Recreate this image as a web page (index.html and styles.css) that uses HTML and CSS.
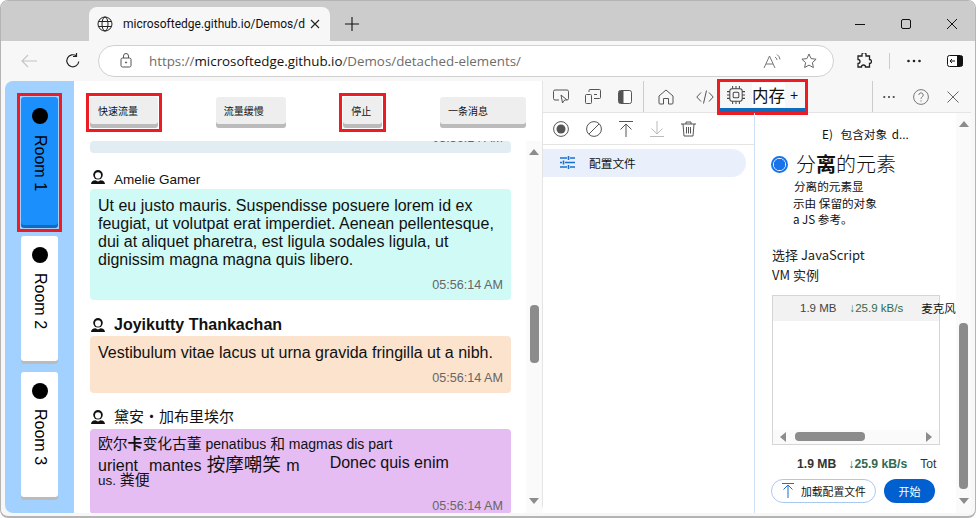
FILE: index.html
```html
<!DOCTYPE html>
<html lang="en">
<head>
    <meta charset="UTF-8">
    <meta name="viewport" content="width=device-width, initial-scale=1.0">
    <title>Detached elements</title>
    <link rel="stylesheet" href="styles.css">
</head>
<body>
<div class="window">
    <div class="tabstrip">
        <div class="tab">
            <svg class="globe" width="16" height="16" viewBox="0 0 16 16" fill="none" stroke="#222" stroke-width="1"><circle cx="8" cy="8" r="7"/><ellipse cx="8" cy="8" rx="3" ry="7"/><path d="M1.500 5.500h13M1.500 10.500h13"/></svg>
            <span class="tab-title">microsoftedge.github.io/Demos/d</span>
            <svg class="tab-close" width="10" height="10" viewBox="0 0 10 10" stroke="#222" stroke-width="1.100"><path d="M1 1l8 8M9 1l-8 8"/></svg>
        </div>
        <svg class="newtab" width="14" height="14" viewBox="0 0 14 14" stroke="#111" stroke-width="1.100"><path d="M7 0v14M0 7h14"/></svg>
        <div class="winctl">
            <svg width="12" height="12" viewBox="0 0 12 12" stroke="#111" stroke-width="1"><path d="M1 6.500h10"/></svg>
            <svg width="12" height="12" viewBox="0 0 12 12" fill="none" stroke="#111" stroke-width="1"><rect x="1.500" y="1.500" width="9" height="9" rx="1.500"/></svg>
            <svg width="12" height="12" viewBox="0 0 12 12" stroke="#111" stroke-width="1"><path d="M1 1l10 10M11 1L1 11"/></svg>
        </div>
    </div>

    <div class="toolbar">
        <svg class="nav-back" width="16" height="14" viewBox="0 0 16 14" fill="none" stroke="#c4c4c4" stroke-width="1.100"><path d="M16 7H1M7 1L1 7l6 6"/></svg>
        <svg class="nav-reload" width="16" height="16" viewBox="0 0 16 16" fill="none" stroke="#222" stroke-width="1.200"><path d="M13.800 8.500A6 6 0 1 1 11.500 3M11.500 0v3.500H8"/></svg>
        <div class="address">
            <svg width="12" height="15" viewBox="0 0 12 15" fill="none" stroke="#555" stroke-width="1"><rect x="1" y="5" width="10" height="9" rx="1.500"/><path d="M3.500 5V3a2.500 2.500 0 0 1 5 0v2"/><circle cx="6" cy="9.500" r=".6" fill="#555"/></svg>
            <span class="url"><span class="url-dim">https://</span>microsoftedge.github.io<span class="url-dim">/Demos/detached-elements/</span></span>
            <svg class="read" width="20" height="16" viewBox="0 0 20 16" fill="none" stroke="#777" stroke-width="1"><path d="M1 15L6.500 3 12 15M3 11h7M12 4a4 4 0 0 1 2 3M14 1.500a7 7 0 0 1 3 5"/></svg>
            <svg width="16" height="16" viewBox="0 0 16 16" fill="none" stroke="#666" stroke-width="1"><path d="M8 1l2.100 4.600 5 .6-3.700 3.400 1 5L8 12.100 3.600 14.600l1-5L.9 6.200l5-.6z"/></svg>
        </div>
        <svg class="ext" width="16" height="16" viewBox="0 0 16 16" fill="none" stroke="#222" stroke-width="1.300"><path d="M6 1.500a2 2 0 0 1 4 0V3h3.500v3.500a2 2 0 0 1 0 4V14H9.500a2 2 0 0 0-4 0H2v-3.500a2 2 0 0 0 0-4V3h4z"/></svg>
        <span class="tb-sep"></span>
        <svg class="dots" width="14" height="4" viewBox="0 0 14 4" fill="#222"><circle cx="1.500" cy="2" r="1.300"/><circle cx="7" cy="2" r="1.300"/><circle cx="12.500" cy="2" r="1.300"/></svg>
        <svg class="sidebar-ico" width="16" height="12" viewBox="0 0 16 12"><rect x=".5" y=".5" width="15" height="11" rx="2" fill="#fff" stroke="#111"/><rect x="10" y="1" width="5.500" height="10" fill="#111"/><path d="M8 6H3M5 4L3 6l2 2" fill="none" stroke="#111"/></svg>
    </div>

    <div class="content">
        <aside class="rooms">
            <div class="marked marked-room">
                <div class="room room-active"><span class="dot"></span><span class="room-name">Room 1</span></div>
            </div>
            <div class="room"><span class="dot"></span><span class="room-name">Room 2</span></div>
            <div class="room"><span class="dot"></span><span class="room-name">Room 3</span></div>
        </aside>

        <main class="chat">
            <div class="actions">
                <div class="marked"><button class="btn btn-fast">快速流量</button></div>
                <button class="btn btn-slow">流量缓慢</button>
                <div class="marked"><button class="btn btn-stop">停止</button></div>
                <button class="btn btn-one">一条消息</button>
            </div>
            <div class="chat-body">
                <div class="messages">
                    <div class="bubble bubble-cut"><time>05:56:14 AM</time></div>

                    <div class="author author-first">
                        <svg class="avatar" width="14" height="14" viewBox="0 0 14 14"><circle cx="7" cy="4.800" r="4.800" fill="#111"/><ellipse cx="7" cy="5.400" rx="3" ry="3.100" fill="#fff"/><path d="M0 14c0-2.500 2-3.500 4.500-3.800L7 11.500l2.500-1.300C12 10.500 14 11.500 14 14z" fill="#111"/></svg>
                        <span>Amelie Gamer</span>
                    </div>
                    <div class="bubble bubble-cyan">
                        <p>Ut eu justo mauris. Suspendisse posuere lorem id ex feugiat, ut volutpat erat imperdiet. Aenean pellentesque, dui at aliquet pharetra, est ligula sodales ligula, ut dignissim magna magna quis libero.</p>
                        <time>05:56:14 AM</time>
                    </div>

                    <div class="author author-big">
                        <svg class="avatar" width="14" height="14" viewBox="0 0 14 14"><circle cx="7" cy="4.800" r="4.800" fill="#111"/><ellipse cx="7" cy="5.400" rx="3" ry="3.100" fill="#fff"/><path d="M0 14c0-2.500 2-3.500 4.500-3.800L7 11.500l2.500-1.300C12 10.500 14 11.500 14 14z" fill="#111"/></svg>
                        <span>Joyikutty Thankachan</span>
                    </div>
                    <div class="bubble bubble-peach">
                        <p>Vestibulum vitae lacus ut urna gravida fringilla ut a nibh.</p>
                        <time>05:56:14 AM</time>
                    </div>

                    <div class="author author-third">
                        <svg class="avatar" width="14" height="14" viewBox="0 0 14 14"><circle cx="7" cy="4.800" r="4.800" fill="#111"/><ellipse cx="7" cy="5.400" rx="3" ry="3.100" fill="#fff"/><path d="M0 14c0-2.500 2-3.500 4.500-3.800L7 11.500l2.500-1.300C12 10.500 14 11.500 14 14z" fill="#111"/></svg>
                        <span>黛安·加布里埃尔</span>
                    </div>
                    <div class="bubble bubble-purple">
                        <div class="mixed-1"><span class="cjk">欧尔<b>卡</b>变化古董</span> penatibus <span class="cjk">和</span> magmas dis part</div>
                        <div class="mixed-2"><span>urient&nbsp; mantes <span class="cjk">按摩嘲笑</span> m</span><span class="mixed-gap">Donec quis enim</span></div>
                        <div class="mixed-3">us. <span class="cjk">粪便</span></div>
                        <time>05:56:14 AM</time>
                    </div>
                </div>
                <div class="scrollbar">
                    <span class="arrow-up"></span>
                    <span class="track"><span class="thumb"></span></span>
                    <span class="arrow-down"></span>
                </div>
            </div>
        </main>

        <section class="devtools">
            <div class="dt-tabs">
                <div class="dt-group">
                    <svg width="16" height="15" viewBox="0 0 16 15" fill="none" stroke="#555" stroke-width="1"><path d="M6 11H2a1.500 1.500 0 0 1-1.500-1.500v-7A1.500 1.500 0 0 1 2 1h12a1.500 1.500 0 0 1 1.500 1.500v7A1.500 1.500 0 0 1 14 11h-1"/><path d="M8 6l1.500 8 1.500-2.500 2.500-1z"/></svg>
                    <svg width="16" height="15" viewBox="0 0 16 15" fill="none" stroke="#555" stroke-width="1"><rect x=".5" y="5.500" width="6" height="9" rx="1"/><path d="M4 3V1.500A1 1 0 0 1 5 .5h9.500a1 1 0 0 1 1 1v7a1 1 0 0 1-1 1H9M9 5.500h3"/></svg>
                    <svg class="dock-ico" width="14" height="14" viewBox="0 0 14 14"><rect x=".5" y=".5" width="13" height="13" rx="2" fill="#fff" stroke="#555"/><rect x="1" y="1" width="4.500" height="12" fill="#555"/></svg>
                </div>
                <div class="dt-group dt-group-panels">
                    <svg width="16" height="16" viewBox="0 0 16 16" fill="none" stroke="#555" stroke-width="1"><path d="M1 7l7-6 7 6v7a1 1 0 0 1-1 1h-3.500V9.500h-5V15H2a1 1 0 0 1-1-1z"/></svg>
                    <svg width="18" height="14" viewBox="0 0 18 14" fill="none" stroke="#555" stroke-width="1"><path d="M5 2.500L.8 7 5 11.500M13 2.500L17.200 7 13 11.500M10.500.5l-3 13"/></svg>
                </div>
                <div class="dt-tab-active">
                    <svg width="18" height="18" viewBox="0 0 16 16" fill="none" stroke="#444" stroke-width=".9"><rect x="2.500" y="2.500" width="11" height="11" rx="2"/><rect x="5.500" y="5.500" width="5" height="5" rx="1"/><path d="M5 0v2.500M8 0v2.500M11 0v2.500M5 13.500V16M8 13.500V16M11 13.500V16M0 5h2.500M0 8h2.500M0 11h2.500M13.500 5H16M13.500 8H16M13.500 11H16"/></svg>
                    <span class="dt-tab-label">内存</span>
                    <span class="dt-tab-plus">+</span>
                </div>
                <div class="dt-right">
                    <svg width="12" height="4" viewBox="0 0 12 4" fill="#444"><circle cx="1.300" cy="2" r="1.100"/><circle cx="6" cy="2" r="1.100"/><circle cx="10.700" cy="2" r="1.100"/></svg>
                    <svg class="help-ico" width="16" height="16" viewBox="0 0 16 16" fill="none" stroke="#777" stroke-width="1"><circle cx="8" cy="8" r="7.400"/><path d="M5.800 6a2.200 2.200 0 1 1 3.400 1.900C8.400 8.400 8 8.900 8 9.800M8 11.400v1.200"/></svg>
                    <svg class="close-ico" width="12" height="12" viewBox="0 0 12 12" stroke="#666" stroke-width="1"><path d="M.5.500l11 11M11.500.5l-11 11"/></svg>
                </div>
            </div>

            <div class="dt-main">
                <div class="profiles">
                    <div class="profile-tools">
                        <svg width="16" height="16" viewBox="0 0 16 16"><circle cx="8" cy="8" r="7.400" fill="none" stroke="#555"/><circle cx="8" cy="8" r="4.500" fill="#555"/></svg>
                        <svg width="16" height="16" viewBox="0 0 16 16" fill="none" stroke="#555"><circle cx="8" cy="8" r="7.400"/><path d="M3 13L13 3"/></svg>
                        <svg width="14" height="16" viewBox="0 0 14 16" fill="none" stroke="#555"><path d="M0 .5h14M7 16V3M1.500 8.500L7 3l5.500 5.500"/></svg>
                        <svg width="14" height="16" viewBox="0 0 14 16" fill="none" stroke="#bbb"><path d="M0 15.500h14M7 0v13M1.500 7.500L7 13l5.500-5.500"/></svg>
                        <svg width="15" height="16" viewBox="0 0 15 16" fill="none" stroke="#555"><path d="M0 3h15M5 3V1h5v2M2 3l1 12h9l1-12M5.500 6v6.500M7.500 6v6.500M9.500 6v6.500"/></svg>
                    </div>
                    <div class="profile-item">
                        <svg width="15" height="13" viewBox="0 0 15 13" fill="none" stroke="#1a6fd0" stroke-width="1.600"><path d="M0 2h7M10 2h5M0 6.500h2M5 6.500h10M0 11h7M10 11h5M8.500 0v4M3.500 4.500v4M8.500 9v4"/></svg>
                        <span>配置文件</span>
                    </div>
                </div>

                <div class="panel">
                    <div class="panel-body">
                        <div class="opt-prev"><span class="opt-e">E)</span> 包含对象 <span class="opt-d">d...</span></div>
                        <label class="opt-radio"><span class="radio"></span><span>分<b>离</b>的元素</span></label>
                        <div class="opt-desc">
                            <div>分离的元素显</div>
                            <div class="indent-less">示由 保留的对象</div>
                            <div class="indent-less">a JS 参考。</div>
                        </div>
                        <div class="vm-title">选择 JavaScript<br>VM 实例</div>
                        <div class="vm-box">
                            <div class="vm-row">
                                <span class="vm-size">1.9 MB</span>
                                <span class="vm-speed">↓25.9 kB/s</span>
                                <span class="vm-name">麦克风</span>
                            </div>
                            <div class="hbar">
                                <span class="arrow-left"></span>
                                <span class="htrack"><span class="hthumb"></span></span>
                                <span class="arrow-right"></span>
                            </div>
                        </div>
                        <div class="totals">
                            <b class="vm-size">1.9 MB</b>
                            <b class="vm-speed">↓25.9 kB/s</b>
                            <span class="total-label">Tot</span>
                        </div>
                        <div class="panel-actions">
                            <button class="btn-load">
                                <svg width="12" height="15" viewBox="0 0 12 15" fill="none" stroke="#1a6fd0"><path d="M0 .5h12M6 15V2M1.500 6.500L6 2l4.500 4.500"/></svg>
                                <span>加载配置文件</span>
                            </button>
                            <button class="btn-start">开始</button>
                        </div>
                    </div>
                    <div class="scrollbar panel-scroll">
                        <span class="arrow-up"></span>
                        <span class="track"><span class="thumb"></span></span>
                        <span class="arrow-down"></span>
                    </div>
                </div>
            </div>
        </section>
    </div>
</div>
</body>
</html>
```

FILE: styles.css
```css
* {
    box-sizing: border-box;
}

html, body {
    height: 100%;
}

body {
    margin: 0;
    background-color: #fff;
    overflow: hidden;
    font-family: "Liberation Sans", "Noto Sans CJK SC", sans-serif;
    color: #111;
}

svg {
    flex: none;
    display: block;
}

.window {
    width: 976px;
    height: 518px;
    display: flex;
    flex-direction: column;
    border: 1px solid #b4b4b4;
    border-bottom-width: 2px;
    border-radius: 8px;
    background-color: #f7f7f7;
    overflow: hidden;
}

/* Tab strip */
.tabstrip {
    height: 40px;
    flex: none;
    display: flex;
    align-items: flex-end;
    background-color: #cccccc;
}

.tab {
    width: 241px;
    height: 34px;
    margin-left: 88px;
    padding: 0 10px 0 8px;
    display: flex;
    align-items: center;
    background-color: #f7f7f7;
    border-radius: 8px 8px 0 0;
}

.globe {
    margin-right: 10px;
}

.tab-title {
    white-space: nowrap;
    font-family: Roboto, "Liberation Sans", sans-serif;
    font-size: 12px;
}

.tab-close {
    margin-left: auto;
}

.newtab {
    margin: 0 0 10px 15px;
}

.winctl {
    margin: 0 0 11px auto;
    padding-right: 17px;
    display: flex;
    gap: 34px;
}

/* Address bar row */
.toolbar {
    height: 40px;
    flex: none;
    display: flex;
    align-items: center;
    padding-bottom: 1px;
}

.nav-back {
    margin-left: 20px;
}

.nav-reload {
    margin-left: 28px;
}

.address {
    width: 736px;
    height: 32px;
    margin-left: 17px;
    padding: 0 16px 0 21px;
    display: flex;
    align-items: center;
    background-color: #fff;
    border: 1px solid #d0d0d0;
    border-radius: 16px;
}

.url {
    flex: 1;
    margin-left: 17px;
    font-family: "Open Sans", "Liberation Sans", sans-serif;
    font-size: 13.350px;
    color: #111;
}

.url-dim {
    color: #6d6d6d;
}

.read {
    margin-right: 18px;
}

.ext {
    margin-left: 22px;
}

.tb-sep {
    width: 1px;
    height: 16px;
    margin-left: 17px;
    background-color: #ccc;
}

.dots {
    margin-left: 17px;
}

.sidebar-ico {
    margin-left: 26px;
}

/* Page + devtools */
.content {
    flex: 1;
    min-height: 0;
    margin: 0 4px 3px;
    display: flex;
    background-color: #fff;
    border-radius: 8px;
}

.marked {
    margin: -4px;
    padding: 1px;
    display: flex;
    border: 3px solid #ed1c24;
}

.rooms {
    width: 69px;
    flex: none;
    padding: 16px 16px 0;
    background-color: #a2d1ff;
    border-radius: 8px 0 0 8px;
}

.marked-room {
    margin: -4px -4px 4px;
    padding-bottom: 4px;
}

.room {
    width: 37px;
    height: 125px;
    margin-bottom: 11px;
    padding-top: 11px;
    display: flex;
    flex-direction: column;
    align-items: center;
    background-color: #fff;
    border-radius: 3px;
    box-shadow: 0 3px 0 #bbb;
}

.room-active {
    height: 128px;
    margin-bottom: 0;
    background-color: #1b8ffc;
    box-shadow: 0 3px 0 #1569b8;
}

.dot {
    width: 16px;
    height: 16px;
    flex: none;
    border-radius: 50%;
    background-color: #000;
}

.room-name {
    margin-top: 10px;
    writing-mode: vertical-rl;
    font-size: 16px;
    line-height: 18px;
    color: #000;
}

.room-active .room-name {
    margin-top: 11px;
}

.chat {
    width: 469px;
    flex: none;
    display: flex;
    flex-direction: column;
    border-right: 1px solid #e4e4e4;
    border-radius: 0 0 8px 0;
}

.actions {
    height: 60px;
    flex: none;
    padding: 16px 16px 0;
    display: flex;
    justify-content: space-between;
    align-items: flex-start;
}

.btn {
    height: 31px;
    padding: 0 0 4px 8px;
    text-align: left;
    font-family: "Noto Sans CJK SC", sans-serif;
    font-size: 10px;
    color: #111;
    background-color: #eee;
    border: 0;
    border-radius: 3px;
    box-shadow: inset 0 -4px 0 #bbb;
}

.btn-fast {
    width: 68px;
}

.btn-slow {
    width: 70px;
}

.btn-stop {
    width: 39px;
}

.btn-one {
    width: 86px;
}

.chat-body {
    flex: 1;
    min-height: 0;
    display: flex;
}

.messages {
    flex: 1;
    min-width: 0;
    padding: 0 15px 0 16px;
    overflow: hidden;
}

.bubble {
    border-radius: 4px;
    padding: 8px 8px 0;
    font-size: 16px;
    line-height: 18px;
    color: #111;
}

.bubble p {
    margin: 0;
}

.bubble time {
    display: block;
    margin-top: 7px;
    text-align: right;
    font-size: 12.600px;
    color: #666;
}

.bubble-cut {
    height: 12px;
    padding: 0 8px;
    overflow: hidden;
    background-color: #e2ecf3;
}

.bubble-cut time {
    margin-top: -12px;
}

.bubble-cyan {
    height: 111px;
    background-color: #cffaf6;
}

.bubble-peach {
    height: 57px;
    background-color: #fbe3ce;
}

.bubble-purple {
    height: 85px;
    padding-top: 6px;
    background-color: #e6bdf3;
}

.bubble-purple time {
    margin-top: 9px;
}

.author {
    height: 18px;
    margin: 15px 0 3px 1px;
    display: flex;
    align-items: center;
    gap: 9px;
    font-size: 13.500px;
    color: #111;
}

.author-first {
    margin: 17px 0 1px 1px;
}

.author-first .avatar {
    margin-top: -4px;
}

.author-big {
    margin: 16px 0 2px 1px;
    font-size: 16px;
    font-weight: bold;
}

.author-third {
    font-family: "Noto Sans CJK SC", sans-serif;
    font-size: 15px;
}

.author-third span {
    margin-top: -4px;
}

.cjk {
    font-family: "Noto Sans CJK SC", sans-serif;
    line-height: 0;
}

.mixed-1 {
    white-space: nowrap;
    font-size: 14px;
}

.mixed-1 .cjk {
    font-size: 14.800px;
}

.mixed-2 {
    margin-top: 5px;
    display: flex;
    white-space: nowrap;
    word-spacing: 1px;
    font-size: 16px;
    line-height: 16px;
}

.mixed-2 .cjk {
    font-size: 18.500px;
}

.mixed-gap {
    margin: -3px 0 0 30px;
    word-spacing: 0;
}

.mixed-3 {
    font-size: 13.500px;
    line-height: 14px;
}

.mixed-3 .cjk {
    font-size: 15px;
}

/* Scrollbars */
.scrollbar {
    width: 16px;
    flex: none;
    padding-top: 8px;
    display: flex;
    flex-direction: column;
    align-items: center;
    background-color: #fafafa;
}

.arrow-up,
.arrow-down {
    width: 0;
    height: 0;
    flex: none;
    border-left: 5px solid transparent;
    border-right: 5px solid transparent;
}

.arrow-up {
    border-bottom: 6px solid #8c8c8c;
}

.arrow-down {
    margin-bottom: 9px;
    border-top: 6px solid #8c8c8c;
}

.track {
    flex: 1;
    width: 100%;
    padding-top: 150px;
    display: flex;
    justify-content: center;
}

.thumb {
    width: 9px;
    height: 58px;
    background-color: #8c8c8c;
    border-radius: 4px;
}

/* Devtools */
.devtools {
    flex: 1;
    min-width: 0;
    display: flex;
    flex-direction: column;
}

.dt-tabs {
    height: 32px;
    flex: none;
    display: flex;
    align-items: center;
    background-color: #f7f7f7;
    border-bottom: 1px solid #e4e4e4;
}

.dt-group {
    height: 100%;
    padding: 0 11px 0 10px;
    display: flex;
    align-items: center;
    gap: 16px;
    border-right: 1px solid #ccc;
}

.dock-ico {
    margin-left: 1px;
}

.dt-group-panels {
    gap: 22px;
    padding: 0 0 0 14px;
    border-right: 0;
}

.dt-tab-active {
    width: 91px;
    height: 36px;
    margin: -2px 0 0 3px;
    padding: 0 0 4px 7px;
    display: flex;
    align-items: center;
    align-self: flex-start;
    background-color: #f7f7f7;
    border: 3px solid #ed1c24;
    box-shadow: inset 0 -4px 0 #0f6cbd;
}

.dt-tab-label {
    margin-left: 7px;
    background-color: #fff;
    font-family: "Noto Sans CJK SC", sans-serif;
    font-size: 16.500px;
    line-height: 24px;
    color: #111;
}

.dt-tab-plus {
    margin-left: 5px;
    font-size: 14px;
}

.dt-right {
    height: 100%;
    flex: 1;
    margin-left: 64px;
    padding-left: 10px;
    display: flex;
    align-items: center;
    border-left: 1px solid #ccc;
}

.help-ico {
    margin-left: 18px;
}

.close-ico {
    margin-left: 18px;
}

.dt-main {
    flex: 1;
    min-height: 0;
    display: flex;
}

.profiles {
    width: 212px;
    flex: none;
    border-right: 1px solid #cfe0f5;
}

.profile-tools {
    height: 32px;
    padding-left: 10px;
    display: flex;
    align-items: center;
    gap: 17px;
    border-bottom: 1px solid #e4e4e4;
}

.profile-item {
    width: 203px;
    height: 28px;
    margin-top: 4px;
    padding: 0 0 2px 17px;
    display: flex;
    align-items: center;
    gap: 14px;
    background-color: #e9f0fb;
    border-radius: 0 14px 14px 0;
    font-family: "Noto Sans CJK SC", sans-serif;
    font-size: 11.700px;
    color: #111;
}

.panel {
    flex: 1;
    min-width: 0;
    display: flex;
}

.panel-body {
    flex: 1;
    min-width: 0;
    padding-left: 17px;
    font-size: 12px;
}

.opt-prev {
    margin-top: 13px;
    padding-left: 50px;
    font-family: "Noto Sans CJK SC", sans-serif;
    font-size: 11.700px;
    line-height: 16px;
}

.opt-e {
    margin-right: 5px;
}

.opt-d {
    margin-left: 2px;
}

.opt-radio {
    margin: 10px 0 0 -1px;
    display: flex;
    align-items: center;
    gap: 8px;
    font-family: "Noto Sans CJK SC", sans-serif;
    font-size: 20px;
    font-weight: 300;
    line-height: 24px;
}

.opt-radio b {
    font-weight: 700;
}

.radio {
    width: 17px;
    height: 17px;
    flex: none;
    border: 2px solid #1a73e8;
    border-radius: 50%;
    background: radial-gradient(circle, #1a73e8 0 5.500px, #fff 6px);
}

.opt-desc {
    margin: 2px 0 0 22px;
    font-family: "Noto Sans CJK SC", sans-serif;
    font-size: 11.600px;
    line-height: 16.500px;
}

.indent-less {
    margin-left: -1px;
}

.vm-title {
    margin-top: 17px;
    font-family: "Noto Sans CJK SC", sans-serif;
    font-size: 13px;
    line-height: 20px;
    color: #222;
}

.vm-box {
    width: 168px;
    height: 150px;
    margin-top: 10px;
    display: flex;
    flex-direction: column;
    justify-content: space-between;
    border: 1px solid #d5d5d5;
}

.vm-row {
    height: 25px;
    padding-left: 27px;
    display: flex;
    align-items: center;
    background-color: #f2f2f2;
    white-space: nowrap;
    font-size: 11.500px;
    color: #444;
}

.vm-speed {
    margin-left: 13px;
    color: #2f6b4f;
}

.vm-name {
    margin-left: 18px;
    font-family: "Noto Sans CJK SC", sans-serif;
    font-size: 11.500px;
    color: #111;
}

.hbar {
    height: 14px;
    padding: 0 7px;
    display: flex;
    align-items: center;
    background-color: #fafafa;
}

.arrow-left,
.arrow-right {
    width: 0;
    height: 0;
    flex: none;
    border-top: 5px solid transparent;
    border-bottom: 5px solid transparent;
}

.arrow-left {
    border-right: 6px solid #8c8c8c;
}

.arrow-right {
    border-left: 6px solid #8c8c8c;
}

.htrack {
    flex: 1;
    padding-left: 9px;
}

.hthumb {
    display: block;
    width: 70px;
    height: 9px;
    background-color: #8c8c8c;
    border-radius: 4px;
}

.totals {
    height: 18px;
    margin-top: 10px;
    padding-left: 25px;
    display: flex;
    align-items: center;
    white-space: nowrap;
    font-size: 12.200px;
}

.totals .vm-size {
    color: #333;
}

.totals .vm-speed {
    margin-left: 12px;
}

.total-label {
    margin-left: 13px;
    color: #333;
}

.panel-actions {
    margin: 6px 0 0 -1px;
    display: flex;
    gap: 8px;
}

.btn-load {
    width: 105px;
    height: 24px;
    padding: 0 0 0 10px;
    display: flex;
    align-items: center;
    gap: 7px;
    background-color: #fff;
    border: 1px solid #a9c9f5;
    border-radius: 12px;
    font-family: "Noto Sans CJK SC", sans-serif;
    font-size: 10.800px;
    color: #111;
}

.btn-start {
    width: 51px;
    height: 24px;
    padding: 0;
    background-color: #0060d0;
    border: 0;
    border-radius: 12px;
    font-family: "Noto Sans CJK SC", sans-serif;
    font-size: 11px;
    color: #fff;
}

.panel-scroll {
    width: 15px;
}

.panel-scroll .track {
    padding-top: 196px;
}

.panel-scroll .thumb {
    height: 166px;
}
```
